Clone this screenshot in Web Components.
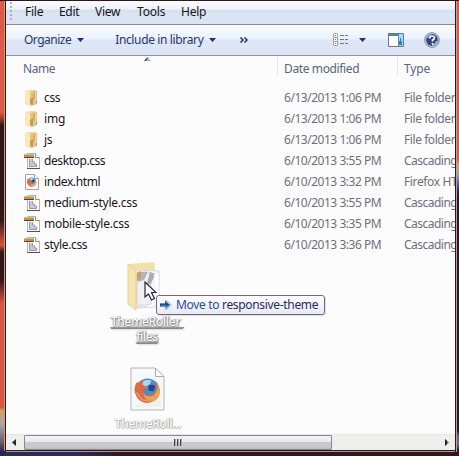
<!DOCTYPE html>
<html lang="en"><head><meta charset="utf-8"><title>Explorer</title>
<style>html,body{margin:0;height:100%;overflow:hidden;background:#32161a}body{font:12px "Noto Sans","Open Sans",sans-serif}</style></head><body>
<explorer-window></explorer-window>
<script>
/* Single-line label whose letter spacing is adjusted to the width given in "w". */
class FitText extends HTMLElement{
 constructor(){super();this.attachShadow({mode:'open'}).innerHTML='<style>:host{display:block;white-space:nowrap;line-height:16px}span{display:inline-block;vertical-align:top;text-decoration:inherit}</style><span><slot></slot></span>'}
 connectedCallback(){const s=this.shadowRoot.querySelector('span'),w=+this.getAttribute('w');if(!w)return;
  const n=this.textContent.length,m=s.getBoundingClientRect().width;s.style.letterSpacing=((w-.8-m)/n)+'px'}
}
customElements.define('fit-text',FitText);

const page='<path d="M1.5.5h9l4 4v11h-13z" fill="#fafafa" stroke="#a3a3ac"/><path d="M10.5.5v4h4" fill="#fff" stroke="#a3a3ac"/>';
const fox=`<circle cx="24" cy="24" r="12" fill="#4c8fc8"/><path d="M16 17q5-5 12-3l-2 4-6 3z" fill="#a7dcf0"/><path d="M25 19q5-2 7 1l-2 5-5-1z" fill="#2b4191"/><path d="M13 16q-4 7 0 14c4 7 14 9 20 2 5-6 3-13-1-17 2 6 1 11-4 13-5 2-9-1-8-5l4-2-5-3 1-4-4 2z" fill="#df6a45"/><path d="M32 14c4 6 2 12-2 15-4 2-8 1-10-2 0 5 5 8 9 8 6-1 9-8 7-13-1-4-2-6-4-8z" fill="#dfa85a"/><path d="M13 26l5 7 8 2" stroke="#ee9660" stroke-width="1.5" fill="none"/>`;
const icons={
 folder:['0 0 16 16',`<path d="M1 1l6-1 6 1v13l-6 2-6-2z" fill="#f1d99b"/><path d="M1 1l5 1v13l-5-1z" fill="#f9e9b9"/><path d="M6 3l4-3 3 1v13l-6 2z" fill="#e6c384"/><path d="M6 9l3-2v8l-3-1z" fill="#c99b4f"/><path d="M9 4l2-2v7l-2 2z" fill="#d3aa66"/><path d="M11 3h1v9h-1z" fill="#f0d9a4"/><path d="M12 11h1v2h-1z" fill="#5f98cc"/>`],
 css:['0 0 16 16',`<path d="M3.500.5h8l4 4v11h-12z" fill="#fafafb" stroke="#b4b4bd"/><path d="M11.500.5v4h4" fill="#fff" stroke="#8f8fa0"/><path d="M0 1h10v4H0z" fill="#c1944a"/><path d="M0 1.500h10" stroke="#dfbd77"/><path d="M0 4.500h10" fill="none" stroke="#5d4030"/><path d="M5 6h4v3h2v2h2v3H5z" fill="#c9cad1"/><path d="M5.500 6v7.500h7V11h-2V9h-2V6" fill="none" stroke="#9a9aa5"/><path d="M3 15.500h13" stroke="#555065"/>`],
 html:['0 0 16 16',page+`<g transform="translate(-1.200 -.9) scale(.37)">${fox}</g>`],
 view:['0 0 16 14',`<g fill="#fff" stroke="#93939e"><rect x=".5" y=".5" width="4" height="4" rx="1"/><rect x=".5" y="4.5" width="4" height="4" rx="1"/><rect x=".5" y="8.5" width="4" height="4" rx="1"/></g><path d="M2 2h1v1H2z" fill="#4773a4"/><path d="M2 6h1v1H2zM2 10h1v1H2z" fill="#bd5545"/><path d="M7 2.5h4m1 0h3M7 6.5h4m1 0h3M7 10.5h4m1 0h3" stroke="#65779a"/>`],
 pane:['0 0 16 14',`<path d="M.5.5h15v13H.5z" fill="#fff" stroke="#587a9b"/><path d="M1 2h9" stroke="#5282ab" stroke-width="2"/><path d="M10 1h5v12h-5z" fill="#a2dcf4"/><path d="M10.500 1v12" stroke="#5893bd"/><path d="M12 5h1v3h1v4h-3V8h1z" fill="#357fb9"/>`],
 help:['0 0 16 16',`<circle cx="8" cy="8" r="7.3" fill="#d2d3dc" stroke="#84838f"/><circle cx="8" cy="8" r="5.9" fill="#31418b"/><path d="M3 6q0-3 4-4M8 13q4 0 5-4" fill="none" stroke="#79bbdc" stroke-width="2"/><path d="M5.5 6.5q0-2.5 2.5-2.5t2.5 2q0 1-2 2v1.5M8.5 11v1.5" fill="none" stroke="#fff" stroke-width="1.7"/>`],
 down:['0 0 7 4','<path d="M0 0h7L3.5 4z" fill="#272d75"/>'],
 up:['0 0 7 4','<path d="M0 4L3.5 0 7 4z" fill="#91c4df"/><path d="M0 4L3.5 0v2L2 4z" fill="#315181"/>'],
 more:['0 0 8 6','<path d="M.5.5L3 3 .5 5.5M4.5.5L7 3 4.5 5.5" fill="none" stroke="#272d75" stroke-width="1.5"/>'],
 left:['0 0 4 7','<path d="M4 0v7L0 3.5z" fill="#29242f"/>'],
 right:['0 0 4 7','<path d="M0 0v7l4-3.5z" fill="#777681"/><path d="M0 0v7l2-2V2z" fill="#32182e"/>'],
 arrow:['0 0 12 10','<path d="M0 3h5V0h2l5 5-5 5H5V7H0z" fill="#b2cce2"/><path d="M0 3.5h5V1l5 4-5 3.5V6.5H0z" fill="#284a92"/><path d="M1 6h5v2l4-3" fill="none" stroke="#69a7d6"/>'],
 bigfolder:['0 0 34 50','<path d="M2 3L27 1l1 6v36L10 47 2 44z" fill="#f3dfa9"/><path d="M9 9l23 1v36l-22 1z" fill="#fafafa" stroke="#d8dade"/><path d="M10 11h12l2 4v28l-14 3z" fill="#f0f0f2" stroke="#d2d3d8"/><path d="M11 11h10l-4 8-6 2z" fill="#b4b5ba"/><path d="M10 12l4-2v8l-4 2z" fill="#c5a26c"/><path d="M23 11l6 2-5 9-5 4z" fill="#a6abb5"/><path d="M27 13l5-2v32l-5 2z" fill="#fdfdfd" stroke="#dfe1e5" stroke-width=".6"/><path d="M1 3l8 7v39l-8-6z" fill="#f8e3ac" stroke="#ebcf96"/><path d="M11 42l9 2v2l-10 2z" fill="#e0e4e8"/>'],
 bigfox:['0 0 35 44',`<path d="M1 1h24l9 9v33H1z" fill="#f8f8f9" stroke="#b0b4ba"/><path d="M25.500 1v8.500H34z" fill="#fff" stroke="#a9adb3"/><path d="M4 39l27-8v9H4z" fill="#f1f2ef"/><g transform="translate(-6.500 -.5)">${fox}</g>`],
 cursor:['0 0 13 20','<path d="M1 1v15l3.500-3 3 6 3-1.500-3-6H12z" fill="#fff" stroke="#282245" stroke-width="1.2"/>']
};
/* Vector glyph selected by "name" and sized by its own view box. */
class UiIcon extends HTMLElement{connectedCallback(){const [v,m]=icons[this.getAttribute('name')],[,,w,h]=v.split(' ');this.attachShadow({mode:'open'}).innerHTML=`<style>:host{display:block;flex:none;width:${w}px;height:${h}px}svg{display:block}</style><svg viewBox="${v}" width="${w}" height="${h}">${m}</svg>`}}
customElements.define('ui-icon',UiIcon);

class MenuBar extends HTMLElement{connectedCallback(){this.attachShadow({mode:'open'}).innerHTML=`<style>
:host{display:grid;grid-template-columns:34px 36px 42px 44px 40px;box-sizing:border-box;padding:3px 0 0 19px;color:#171420;border-bottom:1px solid #89889a;background:radial-gradient(circle,#ccd2df .5px,transparent .8px) 0 9px/4px 3px repeat-x,linear-gradient(#fcfcfe 0,#edf2fb 8px,#dae4f2 9px,#dae4f2);position:relative}
i{position:absolute;left:4px;top:1px;width:2px;height:19px;background:repeating-linear-gradient(#a9b1c1 0 2px,transparent 2px 4px)}</style><i></i>
<fit-text w="19">File</fit-text><fit-text w="21">Edit</fit-text><fit-text w="26">View</fit-text><fit-text w="29">Tools</fit-text><fit-text w="26">Help</fit-text>`}}
customElements.define('menu-bar',MenuBar);

class ToolBar extends HTMLElement{connectedCallback(){this.attachShadow({mode:'open'}).innerHTML=`<style>
:host{display:flex;align-items:center;box-sizing:border-box;padding:0 15px 0 18px;color:#29356f;background:linear-gradient(#fafdff 0,#eaf2fb 14px,#dce6f4 15px,#dce6f4);border-bottom:1px solid #9293a2}
div{display:flex;align-items:center;gap:6px}.inc{margin-left:31px}.m{margin-left:24px}.r{margin-left:auto;gap:0}.v{margin-right:10px}.d{margin-right:22px}.p{margin-right:20px}</style>
<div><fit-text w="48">Organize</fit-text><ui-icon name="down"></ui-icon></div><div class="inc"><fit-text w="89">Include in library</fit-text><ui-icon name="down"></ui-icon></div><ui-icon class="m" name="more"></ui-icon>
<div class="r"><ui-icon class="v" name="view"></ui-icon><ui-icon class="d" name="down"></ui-icon><ui-icon class="p" name="pane"></ui-icon><ui-icon name="help"></ui-icon></div>`}}
customElements.define('tool-bar',ToolBar);

class ColumnHeads extends HTMLElement{connectedCallback(){this.attachShadow({mode:'open'}).innerHTML=`<style>
:host{display:grid;grid-template-columns:271px 120px 1fr;color:#58647c}
div{position:relative;height:19px;padding:5px 0 0 6px;box-sizing:border-box;border-left:1px solid #dce8f3}.name{border:0;padding-left:17px}ui-icon{position:absolute;left:138px;top:1px}</style>
<div class="name"><fit-text w="33">Name</fit-text><ui-icon name="up"></ui-icon></div><div><fit-text w="76">Date modified</fit-text></div><div><fit-text w="27">Type</fit-text></div>`}}
customElements.define('column-heads',ColumnHeads);

class FileRow extends HTMLElement{connectedCallback(){const a=n=>this.getAttribute(n);this.attachShadow({mode:'open'}).innerHTML=`<style>
:host{display:grid;grid-template-columns:20px 240px 120px 1fr;align-items:center;height:21px;padding-left:18px;color:#716e79}.n{color:#19151f}</style>
<ui-icon name="${a('icon')}"></ui-icon><fit-text class="n" w="${a('w')}">${this.textContent}</fit-text><fit-text w="98">${a('date')}</fit-text><fit-text w="${a('tw')}">${a('type')}</fit-text>`}}
customElements.define('file-row',FileRow);

class ScrollBar extends HTMLElement{connectedCallback(){this.attachShadow({mode:'open'}).innerHTML=`<style>
:host{display:grid;grid-template-columns:18px 308px 1fr 10px;background:#eeefeb;border-top:1px solid #dce8f4;align-items:center}
.l{margin-left:6px}.thumb{height:15px;box-sizing:border-box;border:1px solid #898690;border-radius:1px;background:linear-gradient(#f3f2f4 0,#e9e9ed 6px,#cacacc 6px,#cacacc 11px,#bdbec1 12px);display:flex;justify-content:center;align-items:center;gap:1px}.thumb i{width:2px;height:7px;background:#45404f;border-right:1px solid #aaa;box-sizing:border-box}</style>
<ui-icon class="l" name="left"></ui-icon><div class="thumb"><i></i><i></i><i></i></div><span></span><ui-icon name="right"></ui-icon>`}}
customElements.define('scroll-bar',ScrollBar);

/* Freely placed drag image, pointer and drop hint. */
class DragLayer extends HTMLElement{connectedCallback(){this.attachShadow({mode:'open'}).innerHTML=`<style>
:host{position:absolute;inset:0;pointer-events:none}
.item,.hint,.c{position:absolute}.item{display:flex;flex-direction:column;align-items:center;color:#fff;text-shadow:0 1px 1px #888,1px 0 1px #888,-1px 0 1px #bbb,1px 1px 2px #999}
.a{left:105px;top:261px;width:84px}.a fit-text{line-height:15px;text-decoration:underline #999}.a ui-icon{margin:0 7px 3px 0}.b{left:105px;top:367px;width:86px}.b ui-icon{margin:0 1px 5px 0}.b fit-text{text-shadow:0 1px 1px #aaa,1px 0 1px #999,-1px 0 1px #ccc}
.c{left:144px;top:281px}.hint{left:156px;top:295px;width:169px;height:20px;box-sizing:border-box;border:1px solid #746778;border-radius:3px;background:linear-gradient(#fff,#e5eaf4);display:flex;align-items:center;padding-left:3px;gap:4px;color:#2c2959;box-shadow:1px 1px 1px #ddd}b{font-weight:400;color:#2c4c99}</style>
<div class="item a"><ui-icon name="bigfolder"></ui-icon><fit-text w="73">ThemeRoller&nbsp;</fit-text><fit-text w="22">files</fit-text></div>
<div class="item b"><ui-icon name="bigfox"></ui-icon><fit-text w="67">ThemeRoll...</fit-text></div>
<div class="hint"><ui-icon name="arrow"></ui-icon><fit-text w="143"><b>Move to</b> responsive-theme</fit-text></div><ui-icon class="c" name="cursor"></ui-icon>`}}
customElements.define('drag-layer',DragLayer);

class ExplorerWindow extends HTMLElement{connectedCallback(){const t=[['folder',17,'css','13/2013 1:06'],['folder',22,'img','13/2013 1:06'],['folder',9,'js','13/2013 1:06'],['css',62,'desktop.css','10/2013 3:55'],['html',57,'index.html','10/2013 3:32'],['css',94,'medium-style.css','10/2013 3:55'],['css',86,'mobile-style.css','10/2013 3:35'],['css',44,'style.css','10/2013 3:36']];
const kind=i=>i=='folder'?'type="File folder" tw="52"':i=='html'?'type="Firefox HT" tw="54"':'type="Cascading" tw="54"';
this.attachShadow({mode:'open'}).innerHTML=`<style>
:host{display:block;position:relative;box-sizing:border-box;width:459px;height:456px;padding:1px 4px 6px 6px;overflow:hidden;background:
linear-gradient(#32151a,#32151a) 0 0/100% 1px no-repeat,
linear-gradient(90deg,transparent 4px,#d19b72 4px,#d19b72 5px,#32151a 5px) 0 0/6px 451px no-repeat,
linear-gradient(#db5b46 0 112px,#9b3830 119px,#32161a 125px 220px,#d75643 245px,#32161a 252px 280px,#d75643 304px 407px,#d6a067 411px,#a9a6aa 424px,#73606d 441px,#25254e 452px) 0 0/4px 100% no-repeat,
linear-gradient(90deg,#32151a 1px,#a9a9ae 1px,#a9a9ae 2px,transparent 2px) 455px 0/4px 452px no-repeat,
linear-gradient(#da5844 0 158px,#d6a067 165px,#a5a1a8 174px,#2a2559 191px,#32161a 200px 431px,#66617c 436px 445px,#32161a 450px) 457px 0/2px 100% no-repeat,
linear-gradient(90deg,#2b2958 0,#2b2958 80px,#32161a 125px) 0 452px/100% 4px no-repeat,#32161a}
main{display:grid;grid-template-rows:24px 31px 1fr 16px;width:449px;height:449px;background:#fcfcfd;overflow:hidden;border-bottom:1px solid #32161a;box-shadow:0 1px #a29ba2}section{display:flex;flex-direction:column;overflow:hidden}.rows{margin-top:12px}</style>
<main><menu-bar></menu-bar><tool-bar></tool-bar><section><column-heads></column-heads><div class="rows">${t.map(r=>`<file-row icon="${r[0]}" w="${r[1]}" date="6/${r[3]} PM" ${kind(r[0])}>${r[2]}</file-row>`).join('')}</div></section><scroll-bar></scroll-bar></main><drag-layer></drag-layer>`}}
customElements.define('explorer-window',ExplorerWindow);
</script></body></html>
